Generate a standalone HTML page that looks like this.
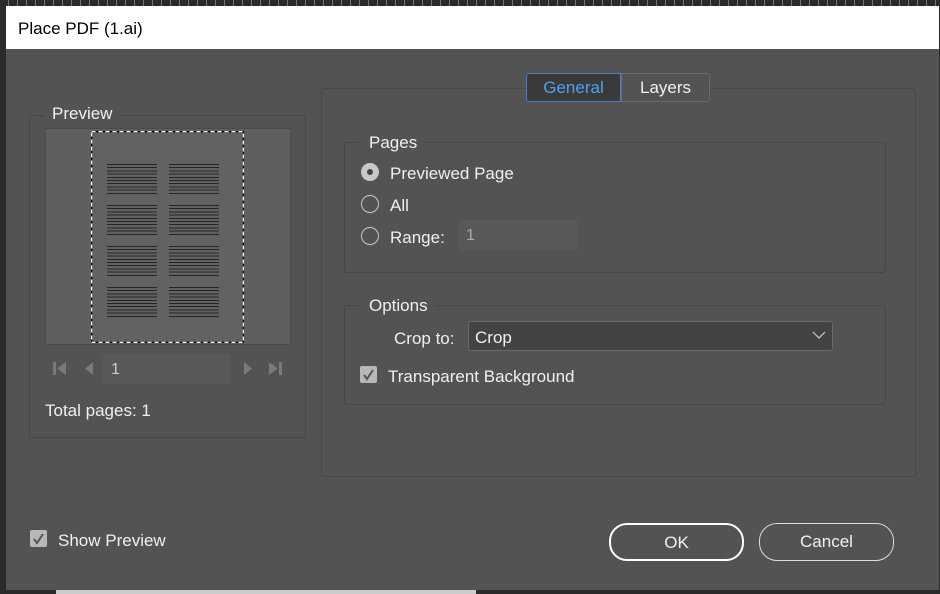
<!DOCTYPE html>
<html><head><style>
*{margin:0;padding:0;box-sizing:border-box}
body{width:940px;height:594px;background:#2b2b2b;position:relative;overflow:hidden;font-family:"Liberation Sans",sans-serif;color:#f0f0f0}
.a{position:absolute}
.dlg{left:6px;top:6px;width:933px;height:584px;background:#535353}
.title{left:6px;top:6px;width:933px;height:43px;background:#fff;color:#000;font-size:17px;padding:13px 0 0 12px}
.grp{border:1px solid #474747;border-radius:3px}
.lbl{background:#535353;padding:0 7px;font-size:17px;color:#f0f0f0}
.t{font-size:17px;color:#f0f0f0}
.blk{width:50px;height:32px;background:repeating-linear-gradient(#1a1a1a 0 1px,transparent 1px 3.2px);opacity:.85}
.radio{width:18px;height:18px;border:1.5px solid #c8c8c8;border-radius:50%}
.chk{width:17px;height:17px;background:#b8b8b8;border-radius:2px}
.btn{border:1.5px solid #e8e8e8;border-radius:18px;height:38px;text-align:center;font-size:17px;line-height:35px}
</style></head><body>
<div class="a" style="left:0;top:0;width:940px;height:6px;background:repeating-linear-gradient(90deg,#2b2b2b 0 8px,#777 8px 9px)"></div>
<div class="a dlg"></div>
<div class="a title">Place PDF (1.ai)</div>

<div class="a grp" style="left:29px;top:115px;width:277px;height:323px"></div>
<div class="a lbl" style="left:45px;top:104px">Preview</div>
<div class="a" style="left:45px;top:128px;width:246px;height:217px;background:#5f5f5f;border:1px solid #4a4a4a"></div>
<div class="a" style="left:91px;top:131px;width:153px;height:212px;background:#626262"></div>
<svg class="a" style="left:91px;top:131px" width="153" height="212"><rect x="0.5" y="0.5" width="152" height="211" fill="none" stroke="#000" stroke-width="1.5"/><rect x="0.5" y="0.5" width="152" height="211" fill="none" stroke="#fff" stroke-width="1.5" stroke-dasharray="4 3"/></svg>
<div class="a blk" style="left:107px;top:164px"></div><div class="a blk" style="left:169px;top:164px"></div>
<div class="a blk" style="left:107px;top:205px"></div><div class="a blk" style="left:169px;top:205px"></div>
<div class="a blk" style="left:107px;top:246px"></div><div class="a blk" style="left:169px;top:246px"></div>
<div class="a blk" style="left:107px;top:287px"></div><div class="a blk" style="left:169px;top:287px"></div>
<svg class="a" style="left:50px;top:360px" width="250" height="18">
<g fill="#7a7a7a"><rect x="3" y="2" width="3" height="13"/><path d="M16 2 L7 8.5 L16 15Z"/><path d="M43 2 L35 8.5 L43 15Z"/>
<path d="M194 2 L202 8.5 L194 15Z"/><path d="M219 2 L228 8.5 L219 15Z"/><rect x="229" y="2" width="3" height="13"/></g></svg>
<div class="a" style="left:103px;top:353px;width:128px;height:31px;background:#585858;border-radius:3px;font-size:16px;color:#ccc;padding:8px 0 0 8px">1</div>
<div class="a t" style="left:45px;top:401px">Total pages: 1</div>

<div class="a grp" style="left:321px;top:88px;width:595px;height:389px"></div>
<div class="a" style="left:526px;top:73px;width:95px;height:29px;background:#3a3a3a;border:1.5px solid #3d7fd0;border-radius:3px 0 0 3px;color:#4fa0f5;font-size:17px;text-align:center;line-height:27px">General</div>
<div class="a" style="left:621px;top:73px;width:89px;height:29px;background:#535353;border:1px solid #6a6a6a;border-radius:0 3px 3px 0;font-size:17px;text-align:center;line-height:27px">Layers</div>

<div class="a grp" style="left:344px;top:142px;width:542px;height:131px"></div>
<div class="a lbl" style="left:362px;top:133px">Pages</div>
<div class="a radio" style="left:361px;top:163px;background:#c8c8c8;border-color:#c8c8c8"></div>
<div class="a" style="left:367px;top:169px;width:6px;height:6px;border-radius:50%;background:#444"></div>
<div class="a t" style="left:390px;top:164px">Previewed Page</div>
<div class="a radio" style="left:361px;top:195px"></div>
<div class="a t" style="left:390px;top:196px">All</div>
<div class="a radio" style="left:361px;top:227px"></div>
<div class="a t" style="left:390px;top:228px">Range:</div>
<div class="a" style="left:458px;top:220px;width:120px;height:31px;background:#585858;border-radius:3px;font-size:16px;color:#aaa;padding:7px 0 0 8px">1</div>

<div class="a grp" style="left:344px;top:305px;width:542px;height:100px"></div>
<div class="a lbl" style="left:362px;top:296px">Options</div>
<div class="a t" style="left:394px;top:329px">Crop to:</div>
<div class="a" style="left:468px;top:321px;width:365px;height:30px;background:#434343;border:1px solid #6a6a6a;border-radius:3px;font-size:17px;padding:6px 0 0 6px">Crop</div>
<svg class="a" style="left:812px;top:331px" width="14" height="9"><path d="M1 1 L7 7 L13 1" fill="none" stroke="#ccc" stroke-width="1.2"/></svg>
<div class="a chk" style="left:360px;top:366px"></div>
<svg class="a" style="left:360px;top:366px" width="17" height="17"><path d="M4 9 L7 13 L13 4" fill="none" stroke="#555" stroke-width="2"/></svg>
<div class="a t" style="left:388px;top:367px">Transparent Background</div>

<div class="a chk" style="left:30px;top:530px"></div>
<svg class="a" style="left:30px;top:530px" width="17" height="17"><path d="M4 9 L7 13 L13 4" fill="none" stroke="#555" stroke-width="2"/></svg>
<div class="a t" style="left:58px;top:531px">Show Preview</div>
<div class="a btn" style="left:609px;top:523px;width:135px;border-width:2.5px;border-color:#fff">OK</div>
<div class="a btn" style="left:759px;top:523px;width:135px;border-width:1px;border-color:#ddd">Cancel</div>

<div class="a" style="left:0;top:590px;width:940px;height:4px;background:#2b2b2b"></div>
<div class="a" style="left:56px;top:590px;width:420px;height:4px;background:#ccc"></div>
</body></html>
